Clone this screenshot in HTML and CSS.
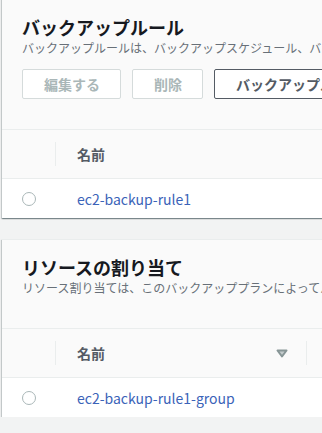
FILE: index.html
```html
<!DOCTYPE html>
<html lang="ja">
<head>
    <meta charset="UTF-8">
    <meta name="viewport" content="width=device-width, initial-scale=1.0">
    <title>バックアッププラン</title>
    <link rel="stylesheet" href="styles.css">
</head>
<body>

<div class="page">
    <!-- バックアップルール -->
    <div class="card card-first">
        <div class="card-header with-actions">
            <h2>バックアップルール</h2>
            <p class="desc">バックアップルールは、バックアップスケジュール、バックアップウィンドウ、ライフサイクルルールを指定します。</p>
            <div class="actions">
                <button class="btn" disabled>編集する</button>
                <button class="btn" disabled>削除</button>
                <button class="btn btn-normal">バックアップルールを追加</button>
            </div>
        </div>
        <div class="table-head">
            <div class="cell-select"></div>
            <div class="cell-name">名前</div>
        </div>
        <div class="table-row">
            <div class="cell-select"><span class="radio"></span></div>
            <div class="cell-name"><a href="#">ec2-backup-rule1</a></div>
        </div>
    </div>

    <!-- リソースの割り当て -->
    <div class="card">
        <div class="card-header">
            <h2>リソースの割り当て</h2>
            <p class="desc">リソース割り当ては、このバックアッププランによってバックアップされるリソースを指定します。</p>
        </div>
        <div class="table-head">
            <div class="cell-select"></div>
            <div class="cell-name sortable">
                名前
                <svg class="sort-icon" width="12" height="9" viewBox="0 0 12 9">
                    <polygon points="1.5,1.5 10.5,1.5 6,7.5" fill="#c3cbcc" stroke="#879596" stroke-width="2" stroke-linejoin="round"/>
                </svg>
            </div>
        </div>
        <div class="table-row">
            <div class="cell-select"><span class="radio"></span></div>
            <div class="cell-name"><a href="#">ec2-backup-rule1-group</a></div>
        </div>
    </div>
</div>

</body>
</html>
```

FILE: styles.css
```css
* { margin: 0; padding: 0; box-sizing: border-box; }
body {
    background: #f2f3f3; overflow: hidden;
    font-family: "Noto Sans CJK JP", "Noto Sans", sans-serif; color: #16191f;
}
.page {
    display: flex; flex-direction: column; gap: 21px;
    padding-left: 2px; width: 400px;
}
.card {
    background: #fafafa; width: 380px;
    box-shadow: 0 1px 1px 0 rgba(0, 28, 36, 0.3), 1px 1px 1px 0 rgba(0, 28, 36, 0.15), -1px 1px 1px 0 rgba(0, 28, 36, 0.15);
    border-top: 1px solid #eaeded;
}
.card-first { margin-top: -1px; }
.card-header {
    padding: 15px 0 31px 20px; border-bottom: 1px solid #eaeded;
}
.card-header.with-actions { padding-bottom: 30px; }
.card-header h2 {
    font-size: 18px; line-height: 24px; font-weight: 700; color: #16191f;
}
.desc {
    font-size: 12px; line-height: 18px; color: #687078; white-space: nowrap;
}
.actions { display: flex; gap: 11px; margin-top: 12px; }
.btn {
    font-family: inherit; font-size: 14px; font-weight: 700; line-height: 20px;
    padding: 4px 20px 4px 21px; border: 1px solid #d5dbdb; border-radius: 2px;
    background: #fff; color: #aab7b8; white-space: nowrap;
}
.btn-normal { border-color: #545b64; color: #545b64; }
.table-head {
    display: flex; align-items: center; height: 49px;
    border-bottom: 1px solid #eaeded;
}
.table-head .cell-select { position: relative; align-self: stretch; }
.table-head .cell-select::after {
    content: ""; position: absolute; right: 0; top: 12px; bottom: 12px;
    border-right: 1px solid #eaeded;
}
.cell-select {
    width: 54px; flex-shrink: 0; display: flex; align-items: center; padding-left: 20px;
}
.cell-name {
    padding-left: 21px; font-size: 14px; line-height: 20px; color: #545b64; font-weight: 700;
}
.sortable {
    display: flex; align-items: center; width: 251px; align-self: stretch;
    position: relative;
}
.sortable::after {
    content: ""; position: absolute; right: 0; top: 12px; bottom: 12px;
    border-right: 1px solid #eaeded;
}
.sort-icon { margin-left: auto; margin-right: 19px; margin-top: 1px; }
.table-row {
    display: flex; align-items: center; height: 39px; background: #fff;
}
.table-row .cell-name { font-weight: 400; }
.table-row a { color: #3a63b8; text-decoration: none; }
.radio {
    display: block; width: 14px; height: 14px; border-radius: 50%;
    border: 1px solid #aab7b8; background: #fff;
}
```
